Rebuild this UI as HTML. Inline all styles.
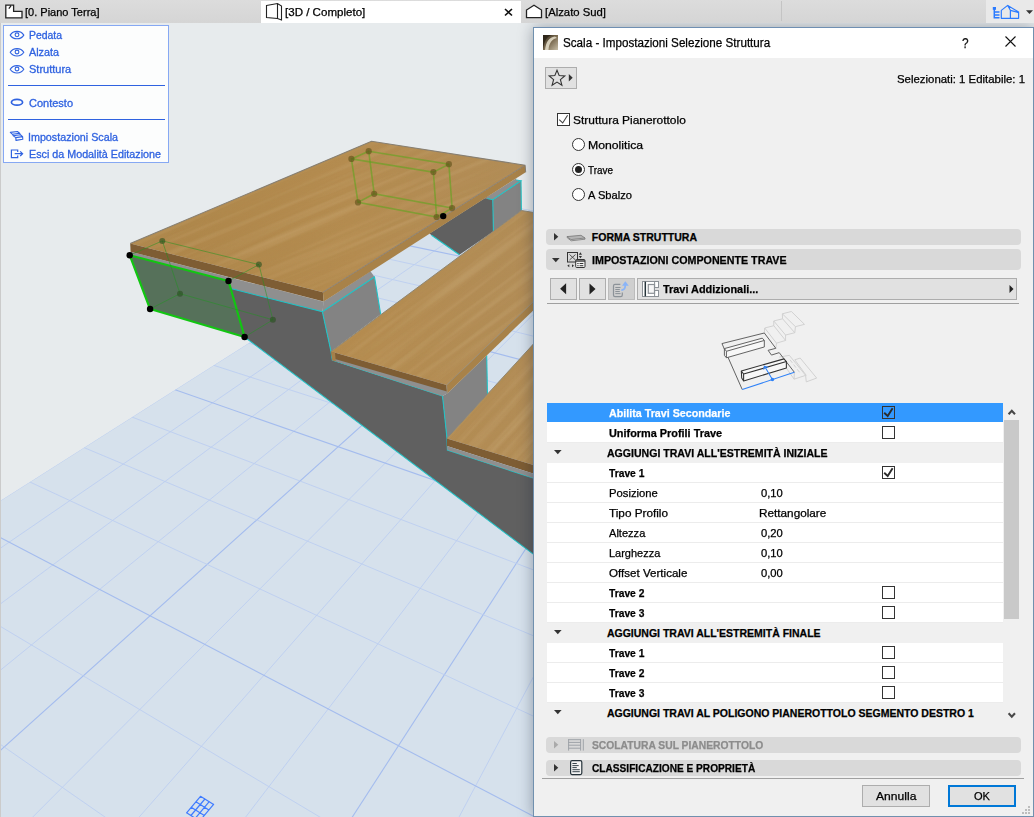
<!DOCTYPE html><html><head><meta charset="utf-8"><title>Scala</title><style>
*{box-sizing:border-box;margin:0;padding:0}
html,body{width:1034px;height:817px;overflow:hidden;background:#e7ebed;font-family:"Liberation Sans",sans-serif;font-size:12px}
.t{position:absolute;white-space:nowrap;line-height:16px;height:16px;transform-origin:0 0;-webkit-text-stroke:0.25px currentColor}
.abs{position:absolute}
.scene{position:absolute;left:0;top:23px}
#tabbar{z-index:3;position:absolute;left:0;top:0;width:1034px;height:23px;background:linear-gradient(#dcdcdc,#d5d5d5)}
#tab2{z-index:3;position:absolute;left:261px;top:1px;width:260px;height:22px;background:#fff}
#panel{position:absolute;left:3px;top:25px;width:166px;height:138px;background:#fcfdfd;border:1px solid #86a8f3}
#dlg{position:absolute;left:533px;top:27px;width:501px;height:790px;background:#f0f0f0;border:1px solid #7090ae;border-top-color:#6f8fb2;box-shadow:0 0 14px rgba(15,25,45,0.36)}
#title{position:absolute;left:534px;top:28px;width:499px;height:30px;background:#fff}
.hdr{position:absolute;left:546px;width:475px;background:#d9d9d9;border-radius:4px}
.btn{position:absolute;background:#e1e1e1;border:1px solid #adadad}
.row{position:absolute;left:547px;width:456px;height:20px;background:#fff;border-bottom:1px solid #ececec}
.row.h{background:#f0f0f0;border-bottom-color:#f0f0f0}
.row.s{background:#3399ff;border-bottom-color:#fff}
.cb{position:absolute;width:13px;height:13px;border:1px solid #333;background:#fff}
.rb{position:absolute;width:13px;height:13px;border:1px solid #333;background:#fff;border-radius:50%}
</style></head><body>
<svg class="scene" width="540" height="794" viewBox="0 23 540 794">
<rect x="0" y="23" width="540" height="794" fill="#e7ebed"/>
<defs><filter id="grain" x="0" y="0" width="100%" height="100%"><feTurbulence type="fractalNoise" baseFrequency="0.006 0.26" numOctaves="3" seed="7"/><feColorMatrix type="matrix" values="0 0 0 0 0.42  0 0 0 0 0.27  0 0 0 0 0.08  1.9 0 0 0 -0.72"/></filter><filter id="grain2" x="0" y="0" width="100%" height="100%"><feTurbulence type="fractalNoise" baseFrequency="0.005 0.17" numOctaves="2" seed="21"/><feColorMatrix type="matrix" values="0 0 0 0 0.85  0 0 0 0 0.68  0 0 0 0 0.42  1.8 0 0 0 -0.75"/></filter><linearGradient id="wg" gradientUnits="userSpaceOnUse" x1="130" y1="240" x2="530" y2="200"><stop offset="0" stop-color="#ad8549"/><stop offset="0.55" stop-color="#b58c50"/><stop offset="1" stop-color="#b28d58"/></linearGradient></defs>
<defs><clipPath id="gc"><polygon points="-1163.4,1239.4 473.9,200.2 654.2,231.5 700.0,900.0 -500.0,900.0"/></clipPath></defs>
<polygon points="-1163.4,1239.4 473.9,200.2 654.2,231.5 700.0,900.0 -500.0,900.0" fill="#d6e1ec"/>
<g clip-path="url(#gc)" fill="none">
<line x1="473.9" y1="200.2" x2="-689.6" y2="938.7" stroke="#bccef1" stroke-width="0.9"/>
<line x1="501.5" y1="204.9" x2="-659.1" y2="1000.0" stroke="#bccef1" stroke-width="0.9"/>
<line x1="530.0" y1="209.9" x2="-624.8" y2="1069.1" stroke="#bccef1" stroke-width="0.9"/>
<line x1="559.4" y1="215.0" x2="-585.8" y2="1147.6" stroke="#bccef1" stroke-width="0.9"/>
<line x1="589.9" y1="220.3" x2="-541.1" y2="1237.5" stroke="#a4bcee" stroke-width="1.1"/>
<line x1="621.5" y1="225.8" x2="-489.4" y2="1341.4" stroke="#bccef1" stroke-width="0.9"/>
<line x1="654.2" y1="231.5" x2="-429.0" y2="1463.0" stroke="#bccef1" stroke-width="0.9"/>
<line x1="688.1" y1="237.3" x2="-357.3" y2="1607.2" stroke="#bccef1" stroke-width="0.9"/>
<line x1="723.3" y1="243.4" x2="-271.0" y2="1780.9" stroke="#a4bcee" stroke-width="1.1"/>
<line x1="759.8" y1="249.8" x2="-165.0" y2="1994.1" stroke="#bccef1" stroke-width="0.9"/>
<line x1="797.7" y1="256.4" x2="-31.8" y2="2262.2" stroke="#bccef1" stroke-width="0.9"/>
<line x1="837.1" y1="263.2" x2="140.8" y2="2609.5" stroke="#bccef1" stroke-width="0.9"/>
<line x1="878.1" y1="270.3" x2="373.2" y2="3076.9" stroke="#a4bcee" stroke-width="1.1"/>
<line x1="920.8" y1="277.7" x2="702.8" y2="3740.2" stroke="#bccef1" stroke-width="0.9"/>
<line x1="965.2" y1="285.4" x2="1207.1" y2="4754.8" stroke="#bccef1" stroke-width="0.9"/>
<line x1="1011.6" y1="293.5" x2="2074.8" y2="6500.6" stroke="#bccef1" stroke-width="0.9"/>
<line x1="473.9" y1="200.2" x2="1060.0" y2="301.9" stroke="#bccef1" stroke-width="0.9"/>
<line x1="458.1" y1="210.2" x2="1065.3" y2="320.2" stroke="#bccef1" stroke-width="0.9"/>
<line x1="441.3" y1="220.8" x2="1071.0" y2="340.2" stroke="#bccef1" stroke-width="0.9"/>
<line x1="423.3" y1="232.3" x2="1077.4" y2="362.3" stroke="#bccef1" stroke-width="0.9"/>
<line x1="403.9" y1="244.6" x2="1084.5" y2="386.7" stroke="#a4bcee" stroke-width="1.1"/>
<line x1="383.0" y1="257.8" x2="1092.3" y2="413.8" stroke="#bccef1" stroke-width="0.9"/>
<line x1="360.5" y1="272.1" x2="1101.0" y2="444.1" stroke="#bccef1" stroke-width="0.9"/>
<line x1="336.0" y1="287.6" x2="1110.9" y2="478.3" stroke="#bccef1" stroke-width="0.9"/>
<line x1="309.5" y1="304.5" x2="1122.1" y2="517.0" stroke="#a4bcee" stroke-width="1.1"/>
<line x1="280.5" y1="322.9" x2="1134.9" y2="561.3" stroke="#bccef1" stroke-width="0.9"/>
<line x1="248.7" y1="343.1" x2="1149.6" y2="612.5" stroke="#bccef1" stroke-width="0.9"/>
<line x1="213.7" y1="365.3" x2="1166.9" y2="672.3" stroke="#bccef1" stroke-width="0.9"/>
<line x1="175.1" y1="389.8" x2="1187.3" y2="743.1" stroke="#a4bcee" stroke-width="1.1"/>
<line x1="132.1" y1="417.1" x2="1211.9" y2="828.2" stroke="#bccef1" stroke-width="0.9"/>
<line x1="84.0" y1="447.6" x2="1242.0" y2="932.5" stroke="#bccef1" stroke-width="0.9"/>
<line x1="29.9" y1="482.0" x2="1279.7" y2="1063.2" stroke="#bccef1" stroke-width="0.9"/>
<line x1="-31.5" y1="520.9" x2="1328.3" y2="1231.8" stroke="#a4bcee" stroke-width="1.1"/>
<line x1="-101.7" y1="565.5" x2="1393.5" y2="1457.7" stroke="#bccef1" stroke-width="0.9"/>
<line x1="-182.9" y1="617.0" x2="1485.4" y2="1776.1" stroke="#bccef1" stroke-width="0.9"/>
<line x1="-277.6" y1="677.1" x2="1624.5" y2="2258.1" stroke="#bccef1" stroke-width="0.9"/>
<line x1="-389.7" y1="748.3" x2="1859.9" y2="3073.9" stroke="#a4bcee" stroke-width="1.1"/>
<line x1="-524.5" y1="833.9" x2="2344.6" y2="4753.5" stroke="#bccef1" stroke-width="0.9"/>
<line x1="-689.6" y1="938.7" x2="3919.9" y2="10212.8" stroke="#bccef1" stroke-width="0.9"/>
</g>
<polygon points="429.5,233.6 431.6,235.2 459.4,254.8 493.3,231.4 492.8,199.8 487.4,196.4" fill="#606060"/>
<polygon points="492.8,199.8 521.0,180.7 521.4,210.5 493.5,231.4" fill="#838383"/>
<polygon points="484.8,198.6 487.4,196.6 516.3,178.2 516.3,179.9 521.0,180.7 492.8,199.8" fill="#8f8f8f"/>
<polyline points="431.6,235.2 459.4,254.8" stroke="#1fc3c6" stroke-width="1.05" fill="none"/>
<polyline points="487.4,198.4 492.8,199.8 521.0,180.7 516.3,179.9" stroke="#1fc3c6" stroke-width="1.05" fill="none"/>
<polyline points="492.8,199.8 493.4,231.4" stroke="#1fc3c6" stroke-width="1.05" fill="none"/>
<polyline points="521.0,180.7 521.4,210.5" stroke="#1fc3c6" stroke-width="1.05" fill="none"/>
<polygon points="228.5,281.0 322.4,311.8 331.0,351.6 332.3,360.2 442.5,395.9 447.0,438.4 447.4,450.1 540.0,480.3 540.0,559.2 244.6,337.0" fill="#606060"/>
<polygon points="130.8,251.7 323.8,301.7 322.4,311.8 231.7,288.8 228.5,281.0 129.7,255.2" fill="#8f8f8f"/>
<polygon points="323.6,301.5 322.4,311.8 374.5,277.0 370.5,271.3" fill="#8f8f8f"/>
<polygon points="322.4,311.8 374.5,277.0 380.7,314.3 331.0,351.6" fill="#838383"/>
<polygon points="442.5,395.9 447.3,393.4 486.7,355.4 487.5,394.2 447.0,438.4" fill="#838383"/>
<polyline points="231.7,288.8 322.4,311.8 331.0,351.6 332.3,360.2 442.5,395.9 447.0,438.4 447.4,450.1 540.0,480.3" stroke="#1fc3c6" stroke-width="1.05" fill="none"/>
<polyline points="244.6,337.0 540.0,559.2" stroke="#1fc3c6" stroke-width="1.05" fill="none"/>
<polyline points="322.4,311.8 374.5,277.0 380.7,314.3" stroke="#1fc3c6" stroke-width="1.05" fill="none"/>
<polyline points="486.7,355.4 487.5,394.2" stroke="#1fc3c6" stroke-width="1.05" fill="none"/>
<clipPath id="wc1"><polygon points="447.0,438.4 540.0,336.8 540.0,467.0"/></clipPath><polygon points="447.0,438.4 540.0,336.8 540.0,467.0" fill="url(#wg)"/><g clip-path="url(#wc1)"><g transform="rotate(-47.5 509 414)"><rect x="179" y="214" width="660" height="400" filter="url(#grain)" opacity="0.24"/><rect x="179" y="214" width="660" height="400" filter="url(#grain2)" opacity="0.2"/></g></g>
<polygon points="447.0,438.4 540.0,467.0 540.0,475.8 447.0,446.1" fill="#7e5d34"/>
<polygon points="447.0,446.1 540.0,475.8 540.0,480.3 447.4,450.1" fill="#8f8f8f"/>
<clipPath id="wc2"><polygon points="331.1,351.6 521.4,210.5 540.0,213.5 540.0,295.2 446.6,385.1"/></clipPath><polygon points="331.1,351.6 521.4,210.5 540.0,213.5 540.0,295.2 446.6,385.1" fill="url(#wg)"/><g clip-path="url(#wc2)"><g transform="rotate(-36.7 476 291)"><rect x="146" y="91" width="660" height="400" filter="url(#grain)" opacity="0.24"/><rect x="146" y="91" width="660" height="400" filter="url(#grain2)" opacity="0.2"/></g></g>
<polygon points="331.1,351.6 446.6,385.1 447.3,393.4 332.3,360.2" fill="#7e5d34"/>
<polygon points="446.6,385.1 540.0,295.2 540.0,304.0 447.3,393.4" fill="#a88249"/>
<polygon points="332.3,358.2 447.0,391.4 447.3,393.4 442.5,395.9 332.3,360.2" fill="#8f8f8f"/>
<polyline points="331.1,351.6 521.4,210.5 540.0,213.5" stroke="#8f8672" stroke-width="1" fill="none"/>
<polyline points="447.3,393.4 446.6,385.1 540.0,295.2" stroke="#9a8c74" stroke-width="1" fill="none"/>
<polyline points="447.0,438.4 540.0,336.8" stroke="#8f8672" stroke-width="1" fill="none"/>
<polygon points="331.1,351.6 335.0,352.7 335.8,361.2 332.3,360.2" fill="#a5804a"/>
<clipPath id="wc3"><polygon points="130.2,243.6 371.5,141.3 525.1,165.2 322.9,292.3"/></clipPath><polygon points="130.2,243.6 371.5,141.3 525.1,165.2 322.9,292.3" fill="url(#wg)"/><g clip-path="url(#wc3)"><g transform="rotate(-23 337 211)"><rect x="7" y="11" width="660" height="400" filter="url(#grain)" opacity="0.24"/><rect x="7" y="11" width="660" height="400" filter="url(#grain2)" opacity="0.2"/></g></g>
<polygon points="130.2,243.6 322.9,292.3 323.7,301.5 130.6,251.7" fill="#7e5d34"/>
<polygon points="322.9,292.3 525.1,165.2 525.7,172.2 323.7,301.5" fill="#a88249"/>
<polyline points="130.2,243.6 371.5,141.3 525.1,165.2" stroke="#877f72" stroke-width="1.1" fill="none"/>
<polyline points="322.9,292.3 525.1,165.2 525.7,172.2" stroke="#8c8275" stroke-width="1" fill="none"/>
<polygon points="129.7,255.2 228.5,281.0 244.6,337.0 150.1,309.0" fill="#56715a" stroke="#12c512" stroke-width="2.2" stroke-linejoin="round"/>
<g stroke-width="1" fill="none">
<polygon points="162.3,240.9 258.9,264.6 272.9,319.8 180.0,293.7" stroke="rgba(30,150,30,0.5)"/>
<line x1="129.7" y1="255.2" x2="162.3" y2="240.9" stroke="rgba(30,150,30,0.5)"/>
<line x1="228.5" y1="281" x2="258.9" y2="264.6" stroke="rgba(30,150,30,0.5)"/>
<line x1="244.6" y1="337" x2="272.9" y2="319.8" stroke="rgba(30,150,30,0.5)"/>
<line x1="150.1" y1="309" x2="180" y2="293.7" stroke="rgba(30,150,30,0.5)"/>
</g>
<circle cx="162.3" cy="240.9" r="3" fill="rgba(40,80,30,0.6)"/>
<circle cx="258.9" cy="264.6" r="3" fill="rgba(40,80,30,0.6)"/>
<circle cx="272.9" cy="319.8" r="3" fill="rgba(40,80,30,0.6)"/>
<circle cx="180" cy="293.7" r="3" fill="rgba(40,80,30,0.6)"/>
<circle cx="129.7" cy="255.2" r="3.2" fill="#000"/>
<circle cx="228.5" cy="281" r="3.2" fill="#000"/>
<circle cx="244.6" cy="337" r="3.2" fill="#000"/>
<circle cx="150.1" cy="309" r="3.2" fill="#000"/>
<g stroke="rgba(95,165,30,0.6)" stroke-width="1.6" fill="none">
<polygon points="351.4,158.9 433.4,172.1 436.6,217.0 358.0,202.4"/><polygon points="368.7,151.2 448.9,164.2 452.1,208.1 374.2,193.8"/>
<line x1="351.4" y1="158.9" x2="368.7" y2="151.2"/>
<line x1="433.4" y1="172.1" x2="448.9" y2="164.2"/>
<line x1="436.6" y1="217" x2="452.1" y2="208.1"/>
<line x1="358" y1="202.4" x2="374.2" y2="193.8"/>
</g>
<circle cx="351.4" cy="158.9" r="3.1" fill="rgba(95,80,25,0.62)"/>
<circle cx="433.4" cy="172.1" r="3.1" fill="rgba(95,80,25,0.62)"/>
<circle cx="436.6" cy="217" r="3.1" fill="rgba(95,80,25,0.62)"/>
<circle cx="358" cy="202.4" r="3.1" fill="rgba(95,80,25,0.62)"/>
<circle cx="368.7" cy="151.2" r="3.1" fill="rgba(95,80,25,0.62)"/>
<circle cx="448.9" cy="164.2" r="3.1" fill="rgba(95,80,25,0.62)"/>
<circle cx="452.1" cy="208.1" r="3.1" fill="rgba(95,80,25,0.62)"/>
<circle cx="374.2" cy="193.8" r="3.1" fill="rgba(95,80,25,0.62)"/>
<circle cx="443.2" cy="216.1" r="3.2" fill="#000"/>
<path d="M200.5 796.3 L186.6 812.8 M200.5 796.3 L213.6 804.4 M204.9 799.0 L190.9 815.5 M195.9 801.8 L208.9 809.9 M209.2 801.7 L195.3 818.3 M191.2 807.3 L204.3 815.5 M213.6 804.4 L199.6 821.0 M186.6 812.8 L199.6 821.0 " stroke="#3f7bff" stroke-width="1.2" fill="none" stroke-linecap="round"/>
</svg>
<div class="abs" style="left:0;top:23px;width:1px;height:794px;background:#cbcbcb"></div>
<div id="tabbar"></div><div id="tab2"></div>
<div class="abs" style="z-index:3;left:986px;top:0;width:48px;height:23px;background:#e9e9e9"></div>
<div class="abs" style="z-index:3;left:781px;top:1px;width:1px;height:20px;background:#c4c4c4"></div>
<svg class="abs" style="left:0;top:0;z-index:4" width="1034" height="23" viewBox="0 0 1034 23" fill="none"><path d="M5.8 17.8 V5.2 H13.6 V11.4 H22 V17.8 Z M8.8 8.6 L11 5.8" stroke="#222" stroke-width="1.3" fill="#fff"/><path d="M266.5 5.5 L277.5 3.5 L281.5 6 V20 L277.5 18.5 L266.5 17.5 Z M277.5 3.5 V18.5" stroke="#222" stroke-width="1.1"/><path d="M526.5 17.700 V10 L534 5.200 L541.5 10 V17.700 Z" stroke="#222" stroke-width="1.3" fill="#fff"/><path d="M505 9 L512 15.5 M512 9 L505 15.5" stroke="#111" stroke-width="1.6"/><path d="M1001.3 18.3 V10.4 L1007.7 5.4 L1018.6 12 V18.3 Z M1007.7 5.4 L1010.4 10.2 V18.3 M1010.4 10.4 L1018.6 12.6" stroke="#2b7bff" stroke-width="1.2" stroke-linejoin="round"/><path d="M994.3 9 V17.7 H999.5 M994.3 12 H999.5 M994.3 15 H999.5" stroke="#2b7bff" stroke-width="1.5"/><rect x="992.8" y="7" width="3.2" height="2.800" fill="#2b7bff"/><path d="M1026 10.2 H1033 L1029.5 14 Z" fill="#333"/></svg>
<span class="t" style="left:24.6px;top:4.00px;font-size:10.5px;color:#000;transform:scaleX(1.0491);z-index:4;">[0. Piano Terra]</span>

<span class="t" style="left:284.6px;top:4.00px;font-size:10.5px;color:#000;transform:scaleX(1.1007);z-index:4;">[3D / Completo]</span>

<span class="t" style="left:544.7px;top:4.00px;font-size:10.5px;color:#000;transform:scaleX(1.0773);z-index:4;">[Alzato Sud]</span>

<div id="panel"></div>
<div class="abs" style="left:8px;top:85px;width:157px;height:1px;background:#2f62e0"></div>
<div class="abs" style="left:8px;top:119px;width:157px;height:1px;background:#2f62e0"></div>
<span class="t" style="left:29.2px;top:27.00px;font-size:10.5px;color:#2f62e0;transform:scaleX(0.9915);-webkit-text-stroke:0.3px #2f62e0;">Pedata</span>

<span class="t" style="left:29.2px;top:44.00px;font-size:10.5px;color:#2f62e0;transform:scaleX(1.0278);-webkit-text-stroke:0.3px #2f62e0;">Alzata</span>

<span class="t" style="left:29.2px;top:61.00px;font-size:10.5px;color:#2f62e0;transform:scaleX(1.0476);-webkit-text-stroke:0.3px #2f62e0;">Struttura</span>

<span class="t" style="left:29.2px;top:95.00px;font-size:10.5px;color:#2f62e0;transform:scaleX(1.0468);-webkit-text-stroke:0.3px #2f62e0;">Contesto</span>

<span class="t" style="left:27.9px;top:129.00px;font-size:10.5px;color:#2f62e0;transform:scaleX(1.0211);-webkit-text-stroke:0.3px #2f62e0;">Impostazioni Scala</span>

<span class="t" style="left:29.2px;top:146.00px;font-size:10.5px;color:#2f62e0;transform:scaleX(1.0233);-webkit-text-stroke:0.3px #2f62e0;">Esci da Modalità Editazione</span>

<svg class="abs" style="left:0;top:23px" width="170" height="145" viewBox="0 23 170 145" fill="none"><g transform="translate(10.2,35.1)"><path d="M0 0 C3 -4.9 10.6 -4.9 13.6 0 C10.6 4.9 3 4.9 0 0 Z" stroke="#2f62e0" stroke-width="1.1" fill="none"/><circle cx="6.8" cy="-0.3" r="1.9" stroke="#2f62e0" stroke-width="1.1" fill="none"/></g><g transform="translate(10.2,52.3)"><path d="M0 0 C3 -4.9 10.6 -4.9 13.6 0 C10.6 4.9 3 4.9 0 0 Z" stroke="#2f62e0" stroke-width="1.1" fill="none"/><circle cx="6.8" cy="-0.3" r="1.9" stroke="#2f62e0" stroke-width="1.1" fill="none"/></g><g transform="translate(10.2,69.3)"><path d="M0 0 C3 -4.9 10.6 -4.9 13.6 0 C10.6 4.9 3 4.9 0 0 Z" stroke="#2f62e0" stroke-width="1.1" fill="none"/><circle cx="6.8" cy="-0.3" r="1.9" stroke="#2f62e0" stroke-width="1.1" fill="none"/></g><ellipse cx="17" cy="102.3" rx="5.6" ry="2.9" stroke="#2f62e0" stroke-width="1.7"/><path d="M10.3 132.4 L17.4 131.500 L19.600 133.300 L12.500 134.300 Z M12.500 134.300 L13.300 135.800 M13.300 135.800 L20.400 134.800 L22.600 136.600 L15.800 137.600 Z M19.600 133.300 L20.400 134.800 M15.800 137.600 L16 140.400 L22.800 139.300 L22.600 136.600" stroke="#2f62e0" stroke-width="1.1" stroke-linejoin="round"/><path d="M17.700 152 V150 H11.400 V157.600 H17.700 V155.600 M14.700 153.700 H22.300 M20.200 151.400 L22.600 153.700 L20.200 156" stroke="#2f62e0" stroke-width="1.2"/></svg>
<div id="dlg"></div><div id="title"></div>
<svg class="abs" style="left:543px;top:35px" width="15" height="15" viewBox="0 0 15 15"><defs><linearGradient id="ig" x1="0" y1="0" x2="1" y2="1"><stop offset="0" stop-color="#2e2618"/><stop offset="0.5" stop-color="#7a6a50"/><stop offset="1" stop-color="#c9bfa8"/></linearGradient></defs><rect width="15" height="15" fill="url(#ig)"/><path d="M2 15 C3 7 6 2 12 1.5 L14 3 C9 4 6 8 5.5 15 Z" fill="#e8e0cc" opacity="0.85"/><path d="M0 15 C1 6 4 1 9 0 L0 0 Z" fill="#2a2216" opacity="0.8"/></svg>
<span class="t" style="left:562.8px;top:35.00px;font-size:12.3px;color:#000;transform:scaleX(0.9473);">Scala - Impostazioni Selezione Struttura</span>

<span class="t" style="left:962.1px;top:35.00px;font-size:14px;color:#111;transform:scaleX(0.8465);">?</span>

<svg class="abs" style="left:1005px;top:36px" width="11" height="11" viewBox="0 0 11 11"><path d="M0.5 0.5 L10.5 10.5 M10.5 0.5 L0.5 10.5" stroke="#111" stroke-width="1.1"/></svg>
<div class="btn" style="left:545px;top:67px;width:32px;height:22px"></div>
<svg class="abs" style="left:545px;top:67px" width="32" height="22" viewBox="0 0 32 22"><path d="M12 3.2 L14.2 8.6 L19.8 9 L15.4 12.6 L16.9 18.2 L12 15.1 L7.1 18.2 L8.6 12.6 L4.2 9 L9.8 8.6 Z" stroke="#333" stroke-width="1.1" fill="none"/><path d="M23.800 7 L27.700 10.700 L23.800 14.400 Z" fill="#333"/></svg>
<span class="t" style="left:896.9px;top:71.00px;font-size:10.5px;color:#000;transform:scaleX(1.0855);">Selezionati: 1 Editabile: 1</span>

<div class="cb" style="left:557px;top:113px;background:#fff"></div><svg class="abs" style="left:557px;top:113px" width="13" height="13" viewBox="0 0 13 13"><path d="M2.2 6.700 L5.700 10 L10.600 2.200" stroke="#444" stroke-width="1.1" fill="none"/></svg>
<span class="t" style="left:572.7px;top:112.00px;font-size:10.5px;color:#000;transform:scaleX(1.1367);">Struttura Pianerottolo</span>

<div class="rb" style="left:572px;top:138px"></div>
<span class="t" style="left:587.8px;top:137.00px;font-size:10.5px;color:#000;transform:scaleX(1.1654);">Monolitica</span>

<div class="rb" style="left:572px;top:163px"></div>
<div class="abs" style="left:575px;top:166px;width:7px;height:7px;border-radius:50%;background:#222"></div>
<span class="t" style="left:587.9px;top:162.00px;font-size:10.5px;color:#000;transform:scaleX(0.9451);">Trave</span>

<div class="rb" style="left:572px;top:188px"></div>
<span class="t" style="left:587.9px;top:187.00px;font-size:10.5px;color:#000;transform:scaleX(1.0614);">A Sbalzo</span>

<div class="hdr" style="top:229px;height:16px"></div>
<svg class="abs" style="left:554px;top:232px" width="6" height="10" viewBox="0 0 6 10"><path d="M0 1 L4.3 4.7 L0 8.4 Z" fill="#333"/></svg>
<svg class="abs" style="left:566px;top:231px" width="20" height="12" viewBox="0 0 20 12" fill="none"><path d="M1 5.600 L15 4.300 L19 7 L5 8.600 Z" fill="#b5b5b5" stroke="#777" stroke-width="0.8"/><path d="M1 5.6 L1.3 6.8 L5.200 9.800 L19 8.200 V7" stroke="#777" stroke-width="0.8"/></svg>
<span class="t" style="left:591.8px;top:229.00px;font-size:10.5px;font-weight:bold;color:#000;">FORMA STRUTTURA</span>

<div class="hdr" style="top:249px;height:21px"></div>
<svg class="abs" style="left:552px;top:258px" width="9" height="5" viewBox="0 0 9 5"><path d="M0 0 H7.6 L3.8 4.3 Z" fill="#333"/></svg>
<svg class="abs" style="left:567px;top:251px" width="19" height="18" viewBox="0 0 19 18" fill="none"><rect x="0.5" y="1.5" width="10" height="9.500" stroke="#333"/><path d="M2.500 3.500 L8.500 9 M8.500 3.500 L2.500 9" stroke="#444" stroke-width="0.9"/><rect x="8.700" y="8.500" width="9.300" height="8" rx="1" fill="#f4f4f4" stroke="#333"/><path d="M8.700 10 H18" stroke="#333" stroke-width="1.400"/><path d="M10.300 12.500 H11.600 M12.600 12.500 H16.300 M10.300 14.700 H11.600 M12.600 14.700 H16.300" stroke="#333"/><path d="M11.800 3.800 L13.400 1.300 L15 3.800 Z M11.800 5 L13.400 7.300 L15 5 Z" fill="#333"/><path d="M0.300 14.700 L2.300 13.200 V16.200 Z M7 14.700 L5 13.200 V16.200 Z" fill="#333"/></svg>
<span class="t" style="left:591.8px;top:252.00px;font-size:10.5px;font-weight:bold;color:#000;transform:scaleX(1.0191);">IMPOSTAZIONI COMPONENTE TRAVE</span>

<div class="btn" style="left:550px;top:278px;width:27px;height:22px"></div>
<div class="btn" style="left:579px;top:278px;width:27px;height:22px"></div>
<div class="btn" style="left:608px;top:278px;width:27px;height:22px;background:#cfcfcf;border-color:#bcbcbc"></div>
<div class="btn" style="left:637px;top:278px;width:380px;height:22px"></div>
<svg class="abs" style="left:550px;top:278px" width="470" height="22" viewBox="0 0 470 22" fill="none"><path d="M16.1 5.2 L10.1 10.700 L16.1 16.200 Z" fill="#222"/><path d="M39.5 5.5 L45.5 11 L39.5 16.5 Z" fill="#222"/><path d="M70.300 6.400 H65 Q63.500 6.400 63.500 8 V17 Q63.500 18.600 65 18.600 H70.800 Q72.300 18.600 72.300 17 V14.500" stroke="#8c9298" stroke-width="1.200"/><path d="M65.300 9.500 H70.500 M65.300 11.500 H69.800 M65.300 13.500 H69.800 M65.300 15.600 H70.500" stroke="#8c9298" stroke-width="1"/><path d="M71.300 12.100 C74.200 12 75.300 10.500 75.300 7" stroke="#8ab4f8" stroke-width="1.700"/><path d="M72 7.700 L75.300 3.200 L78.800 7.700 Z" fill="#8ab4f8"/><rect x="92.500" y="3.500" width="16" height="15" fill="#fff" stroke="#8c9196"/><path d="M95.300 3.700 V18.300" stroke="#26343a" stroke-width="1.500"/><rect x="98.300" y="6.500" width="6.200" height="8.800" fill="#f6f6f6" stroke="#8c9196" stroke-width="1.200"/><path d="M104.600 3.500 V18.500 M104.600 9.500 H108.500 M104.600 12.500 H108.500" stroke="#8c9196"/><rect x="105.200" y="10" width="4" height="2" fill="#e1e1e1"/><path d="M459.5 7 L463.5 11 L459.5 15 Z" fill="#222"/></svg>
<span class="t" style="left:662.7px;top:281.00px;font-size:10.5px;font-weight:bold;color:#000;transform:scaleX(1.0382);">Travi Addizionali...</span>

<div class="abs" style="left:547px;top:303px;width:472px;height:1px;background:#a0a0a0"></div>
<svg class="abs" style="left:700px;top:305px" width="140" height="90" viewBox="0 0 1034 665" fill="none" stroke-linejoin="round"><g stroke="#cfcfcf" stroke-width="7"><path d="M475 207 L478 170 L545 153 L632 262 L565 282 L560 320 M565 282 L478 170 M545 153 L545 118 L610 102 L700 205 L632 222 L632 262 M632 222 L545 118 M610 102 L608 65 L675 48 L772 143 L705 160 L700 205 M705 160 L608 65"/><path d="M585 385 L660 372 L780 520 L695 548 L620 440 M700 405 L740 392 L862 540 L785 568 L780 520 M700 405 L785 520 M695 548 L697 497"/><path d="M665 405 L745 510" stroke-dasharray="28 16"/></g><path d="M312 625 L162 285 L475 207 L560 320 L503 335 L528 370 L585 352 L697 497" stroke="#5a5a5a" stroke-width="7"/><path d="M180 322 L460 245 L475 262 L475 310 L195 390 L180 372 Z" fill="#f7f7f7" stroke="#5a5a5a" stroke-width="7"/><path d="M180 322 L195 342 L475 262 M195 342 V390" stroke="#5a5a5a" stroke-width="7"/><path d="M305 488 L620 398 L638 418 L638 465 L322 562 L308 540 Z" fill="#f7f7f7" stroke="#333" stroke-width="8"/><path d="M305 488 L322 510 L638 418 M322 510 V562" stroke="#333" stroke-width="8"/><path d="M312 625 L697 497" stroke="#2f82f7" stroke-width="8"/><path d="M535 550 L478 455 M470 478 L476 452 L502 462" stroke="#2f82f7" stroke-width="8"/><circle cx="535" cy="550" r="13" fill="#2f82f7"/></svg>
<div class="row s" style="top:403px"></div>
<span class="t" style="left:608.9px;top:405.00px;font-size:10.5px;font-weight:bold;color:#fff;transform:scaleX(1.0198);">Abilita Travi Secondarie</span>

<div class="cb" style="left:882px;top:406px;background:transparent"></div><svg class="abs" style="left:882px;top:406px" width="13" height="13" viewBox="0 0 13 13"><path d="M2.2 6.700 L5.700 10 L10.600 2.200" stroke="#2b2b2b" stroke-width="1.9" fill="none"/></svg>
<div class="row" style="top:423px"></div>
<span class="t" style="left:608.9px;top:425.00px;font-size:10.5px;font-weight:bold;color:#000;transform:scaleX(1.0364);">Uniforma Profili Trave</span>

<div class="cb" style="left:882px;top:426px;background:#fff"></div>
<div class="row h" style="top:443px"></div>
<svg class="abs" style="left:554px;top:450px" width="9" height="5" viewBox="0 0 9 5"><path d="M0 0 H7.6 L3.8 4.3 Z" fill="#333"/></svg>
<span class="t" style="left:606.9px;top:445.00px;font-size:10.5px;font-weight:bold;color:#000;transform:scaleX(1.0046);">AGGIUNGI TRAVI ALL'ESTREMITÀ INIZIALE</span>

<div class="row" style="top:463px"></div>
<span class="t" style="left:608.9px;top:465.00px;font-size:10.5px;font-weight:bold;color:#000;transform:scaleX(0.9778);">Trave 1</span>

<div class="cb" style="left:882px;top:466px;background:#fff"></div><svg class="abs" style="left:882px;top:466px" width="13" height="13" viewBox="0 0 13 13"><path d="M2.2 6.700 L5.700 10 L10.600 2.200" stroke="#2b2b2b" stroke-width="1.9" fill="none"/></svg>
<div class="row" style="top:483px"></div>
<span class="t" style="left:608.9px;top:485.00px;font-size:10.5px;color:#000;transform:scaleX(1.0718);">Posizione</span>

<span class="t" style="left:760.8px;top:485.00px;font-size:10.5px;color:#000;transform:scaleX(1.0667);">0,10</span>

<div class="row" style="top:503px"></div>
<span class="t" style="left:608.8px;top:505.00px;font-size:10.5px;color:#000;transform:scaleX(1.1191);">Tipo Profilo</span>

<span class="t" style="left:758.7px;top:505.00px;font-size:10.5px;color:#000;transform:scaleX(1.1193);">Rettangolare</span>

<div class="row" style="top:523px"></div>
<span class="t" style="left:608.9px;top:525.00px;font-size:10.5px;color:#000;transform:scaleX(1.0541);">Altezza</span>

<span class="t" style="left:760.8px;top:525.00px;font-size:10.5px;color:#000;transform:scaleX(1.0667);">0,20</span>

<div class="row" style="top:543px"></div>
<span class="t" style="left:608.9px;top:545.00px;font-size:10.5px;color:#000;transform:scaleX(1.0459);">Larghezza</span>

<span class="t" style="left:760.8px;top:545.00px;font-size:10.5px;color:#000;transform:scaleX(1.0667);">0,10</span>

<div class="row" style="top:563px"></div>
<span class="t" style="left:608.8px;top:565.00px;font-size:10.5px;color:#000;transform:scaleX(1.1040);">Offset Verticale</span>

<span class="t" style="left:760.8px;top:565.00px;font-size:10.5px;color:#000;transform:scaleX(1.0667);">0,00</span>

<div class="row" style="top:583px"></div>
<span class="t" style="left:608.9px;top:585.00px;font-size:10.5px;font-weight:bold;color:#000;transform:scaleX(0.9778);">Trave 2</span>

<div class="cb" style="left:882px;top:586px;background:#fff"></div>
<div class="row" style="top:603px"></div>
<span class="t" style="left:608.9px;top:605.00px;font-size:10.5px;font-weight:bold;color:#000;transform:scaleX(0.9778);">Trave 3</span>

<div class="cb" style="left:882px;top:606px;background:#fff"></div>
<div class="row h" style="top:623px"></div>
<svg class="abs" style="left:554px;top:630px" width="9" height="5" viewBox="0 0 9 5"><path d="M0 0 H7.6 L3.8 4.3 Z" fill="#333"/></svg>
<span class="t" style="left:606.9px;top:625.00px;font-size:10.5px;font-weight:bold;color:#000;">AGGIUNGI TRAVI ALL'ESTREMITÀ FINALE</span>

<div class="row" style="top:643px"></div>
<span class="t" style="left:608.9px;top:645.00px;font-size:10.5px;font-weight:bold;color:#000;transform:scaleX(0.9778);">Trave 1</span>

<div class="cb" style="left:882px;top:646px;background:#fff"></div>
<div class="row" style="top:663px"></div>
<span class="t" style="left:608.9px;top:665.00px;font-size:10.5px;font-weight:bold;color:#000;transform:scaleX(0.9778);">Trave 2</span>

<div class="cb" style="left:882px;top:666px;background:#fff"></div>
<div class="row" style="top:683px"></div>
<span class="t" style="left:608.9px;top:685.00px;font-size:10.5px;font-weight:bold;color:#000;transform:scaleX(0.9778);">Trave 3</span>

<div class="cb" style="left:882px;top:686px;background:#fff"></div>
<div class="row h" style="top:703px"></div>
<svg class="abs" style="left:554px;top:710px" width="9" height="5" viewBox="0 0 9 5"><path d="M0 0 H7.6 L3.8 4.3 Z" fill="#333"/></svg>
<span class="t" style="left:606.9px;top:705.00px;font-size:10.5px;font-weight:bold;color:#000;">AGGIUNGI TRAVI AL POLIGONO PIANEROTTOLO SEGMENTO DESTRO 1</span>

<div class="abs" style="left:1004px;top:420px;width:15px;height:199px;background:#c9c9c9"></div>
<svg class="abs" style="left:1004px;top:403px" width="15" height="320" viewBox="0 0 15 320" fill="none"><path d="M4.600 11.300 L7.800 7.900 L11 11.300" stroke="#484848" stroke-width="2.1"/><path d="M4.600 310.300 L7.800 313.700 L11 310.300" stroke="#484848" stroke-width="2.1"/></svg>
<div class="hdr" style="top:737px;height:16px"></div>
<svg class="abs" style="left:554px;top:740px" width="6" height="10" viewBox="0 0 6 10"><path d="M0 1 L4.3 4.7 L0 8.4 Z" fill="#aaa"/></svg>
<svg class="abs" style="left:567px;top:738px" width="18" height="14" viewBox="0 0 18 14" fill="none"><path d="M1.200 1.700 H14 M1.200 4.400 H14 M1.200 7.200 H14 M1.200 10.200 H14 M1.600 1.200 V12.600 M13.600 1.200 V12.600 M16.300 1.200 V12.600" stroke="#9ea3a8"/></svg>
<span class="t" style="left:591.8px;top:737.00px;font-size:10.5px;font-weight:bold;color:#8c8c8c;transform:scaleX(0.9804);">SCOLATURA SUL PIANEROTTOLO</span>

<div class="hdr" style="top:760px;height:16px"></div>
<svg class="abs" style="left:554px;top:763px" width="6" height="10" viewBox="0 0 6 10"><path d="M0 1 L4.3 4.7 L0 8.4 Z" fill="#333"/></svg>
<svg class="abs" style="left:569px;top:760px" width="14" height="16" viewBox="0 0 14 16" fill="none"><rect x="1.600" y="0.700" width="11.200" height="13.900" rx="1.500" stroke="#26333b" stroke-width="1.2" fill="#f4f4f4"/><path d="M3.400 3.500 H7.800 M3.400 5.600 H9.700 M3.400 7.600 H7.800 M3.400 9.700 H10.800 M3.400 11.700 H10.800" stroke="#26333b" stroke-width="0.900"/></svg>
<span class="t" style="left:591.8px;top:760.00px;font-size:10.5px;font-weight:bold;color:#000;transform:scaleX(0.9646);">CLASSIFICAZIONE E PROPRIETÀ</span>

<div class="abs" style="left:542px;top:778px;width:482px;height:1px;background:#a0a0a0"></div>
<div class="btn" style="left:862px;top:785px;width:68px;height:22px"></div>
<div class="btn" style="left:948px;top:785px;width:68px;height:22px;border:2px solid #0078d7"></div>
<span class="t" style="left:875.6px;top:788.00px;font-size:10.5px;color:#000;transform:scaleX(1.1533);">Annulla</span>

<span class="t" style="left:973.8px;top:788.00px;font-size:10.5px;color:#000;transform:scaleX(1.0546);">OK</span>

<svg class="abs" style="left:1021px;top:805px" width="10" height="10" viewBox="0 0 10 10" fill="#bdbdbd"><rect x="7" y="1" width="2" height="2"/><rect x="4" y="4" width="2" height="2"/><rect x="7" y="4" width="2" height="2"/><rect x="1" y="7" width="2" height="2"/><rect x="4" y="7" width="2" height="2"/><rect x="7" y="7" width="2" height="2"/></svg>
</body></html>
